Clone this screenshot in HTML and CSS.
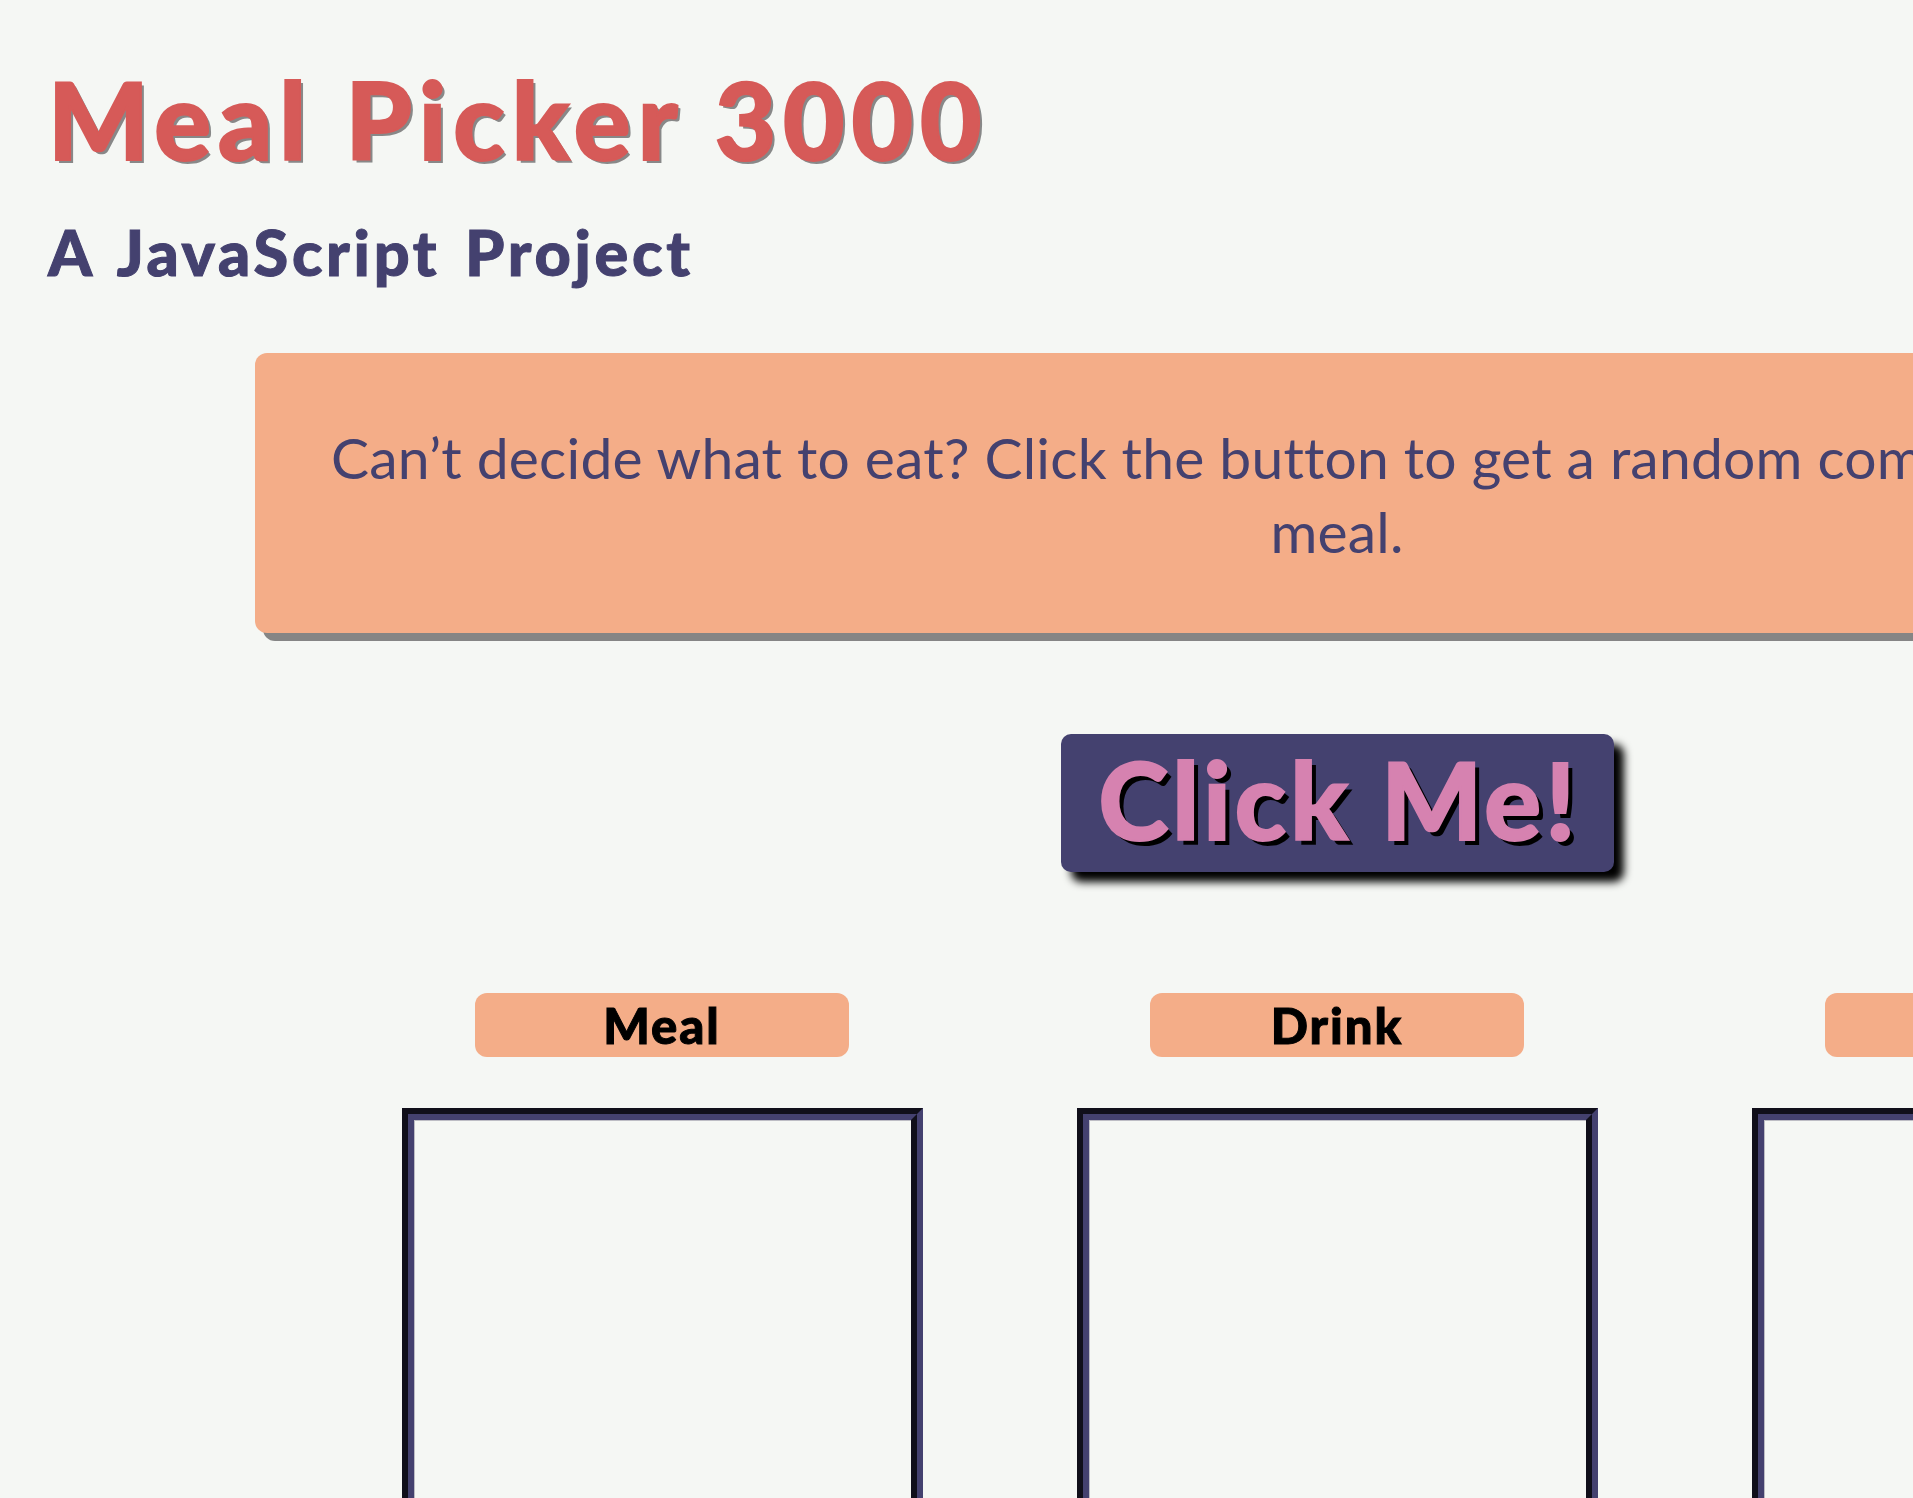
FILE: index.html
```html
<!DOCTYPE html>
<html lang="en">
<head>
<meta charset="utf-8">
<title>Meal Picker 3000</title>
<link rel="stylesheet" href="styles.css">
</head>
<body>
<header class="header">
  <h1 class="title">Meal Picker 3000</h1>
  <h2 class="subtitle">A JavaScript Project</h2>
</header>
<main class="main">
  <div class="intro">
    <p class="intro-text">Can’t decide what to eat? Click the button to get a random combination for your<br>meal.</p>
  </div>
  <div class="action">
    <button class="btn" type="button">Click Me!</button>
  </div>
  <div class="columns">
    <section class="col">
      <h3 class="label">Meal</h3>
      <div class="box"></div>
    </section>
    <section class="col">
      <h3 class="label">Drink</h3>
      <div class="box"></div>
    </section>
    <section class="col">
      <h3 class="label">Dessert</h3>
      <div class="box"></div>
    </section>
  </div>
</main>
</body>
</html>
```
FILE: styles.css
```css
html {
  overflow: hidden;
}
body {
  margin: 0;
  background: #f5f7f4;
  font-family: "Lato", "DejaVu Sans", sans-serif;
  width: 2674px;
}
.header {
  padding-left: 48px;
}
.title {
  margin: 66px 0 0;
  font-size: 106px;
  line-height: 1;
  font-weight: 900;
  letter-spacing: 7px;
  color: #d65a58;
  -webkit-text-stroke: 2px #d65a58;
  text-shadow: 3px 3px 0 #888888;
}
.subtitle {
  margin: 48px 0 0;
  font-size: 63px;
  line-height: 1;
  font-weight: 900;
  letter-spacing: 3.7px;
  word-spacing: 6px;
  color: #44416f;
  -webkit-text-stroke: 1px #44416f;
}
.main {
  margin: 70px 0 0 255px;
  width: 2164px;
}
.intro {
  background: #f4ad88;
  border-radius: 12px;
  box-shadow: 8px 8px 0 #858585;
  padding: 67px 40px 65px;
  text-align: center;
}
.intro-text {
  margin: 0;
  font-size: 57px;
  line-height: 74px;
  letter-spacing: 0.2px;
  color: #44416f;
}
.action {
  display: flex;
  justify-content: center;
  margin-top: 101px;
}
.btn {
  font-family: "Lato", "DejaVu Sans", sans-serif;
  font-size: 106px;
  font-weight: 900;
  line-height: 1;
  letter-spacing: 4px;
  color: #d682b0;
  -webkit-text-stroke: 2px #d682b0;
  background: #44416f;
  border: 0;
  border-radius: 10px;
  padding: 12px 34px 20px 38px;
  text-shadow: 5px 5px 0 #000000;
  box-shadow: 10px 10px 8px #000000;
}
.columns {
  display: flex;
  justify-content: center;
  gap: 154px;
  margin-top: 121px;
}
.col {
  width: 521px;
  display: flex;
  flex-direction: column;
  align-items: center;
}
.label {
  margin: 0;
  width: 374px;
  height: 64px;
  background: #f4ad88;
  border-radius: 12px;
  font-size: 49px;
  line-height: 64px;
  font-weight: 900;
  letter-spacing: 2px;
  color: #000000;
  -webkit-text-stroke: 1px #000000;
  text-align: center;
}
.box {
  margin-top: 51px;
  width: 100%;
  height: 600px;
  box-sizing: border-box;
  border: 12px groove #44416f;
  box-shadow: inset 1px 1px 0 #bdbdc4;
}
```
